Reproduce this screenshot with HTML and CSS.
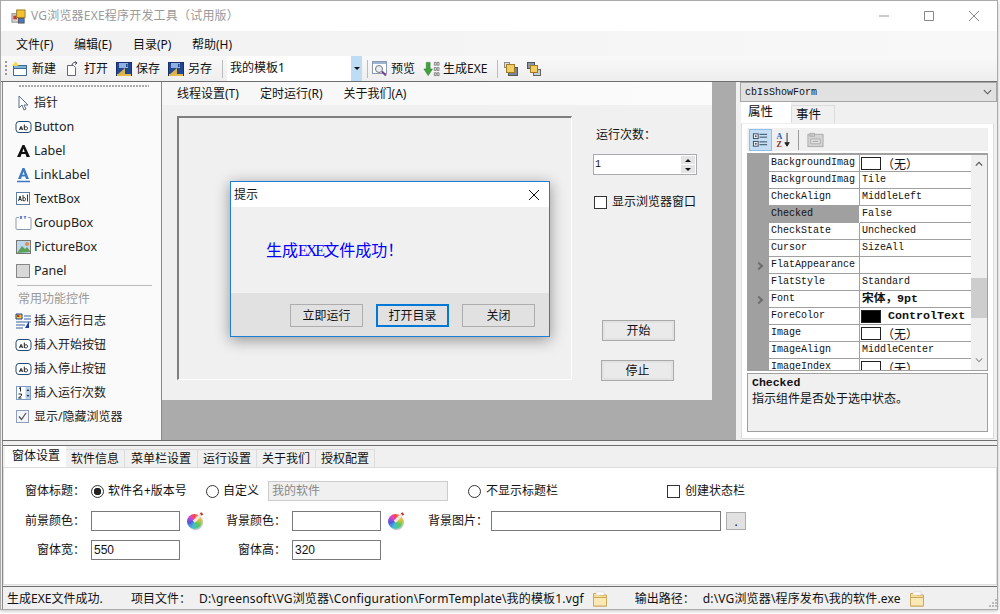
FILE: index.html
```html
<!DOCTYPE html>
<html lang="zh-CN">
<head>
<meta charset="UTF-8">
<title>VG浏览器EXE程序开发工具（试用版）</title>
<link rel="stylesheet" href="styles.css">
</head>
<body>
<svg class="defs" xmlns="http://www.w3.org/2000/svg">
	<symbol id="i-ab" viewBox="0 0 16 16"><rect x="0.5" y="2.5" width="15" height="11" rx="3" fill="#fff" stroke="#23476e"/><path d="M4 11l1.300-3.400h.6L7 11M4.500 9.800h2.200M8.800 5.500V11M8.800 8.500c1.800-1.400 3.200-.8 3.200.8s-1.400 2.200-3.200.8" fill="none" stroke="#222"/></symbol>
	<symbol id="i-folder" viewBox="0 0 17 16"><path d="M1.500 2.500h5l1 1.500h7v11h-13z" fill="#f6dc95" stroke="#c9a860"/><path d="M1.500 6.500h13v8.500h-13z" fill="#fbe9b5" stroke="#c9a860"/><path d="M4 1h8v3H4z" fill="#fff" stroke="#c9c9c9" stroke-width=".5"/></symbol>
	<symbol id="i-save" viewBox="0 0 16 16"><rect x="0.500" y="1.500" width="15" height="13" fill="#23478f" stroke="#1a2f6b"/><path d="M3 2h9v5H3z" fill="#8fb0e0"/><path d="M1 14L9 7v7z" fill="#d7b24e"/><path d="M1 13h14v2H1z" fill="#e0b94a"/><path d="M10 3h1.500v3H10z" fill="#23478f"/></symbol>
	<symbol id="i-stack" viewBox="0 0 16 16"><rect x="5.500" y="6.500" width="9" height="8" fill="#7b8596" stroke="#555"/><rect x="1.500" y="1.500" width="5" height="5" fill="#e0e0e0" stroke="#8c8c8c"/><rect x="3.500" y="3.500" width="8" height="8" fill="#f3cc62" stroke="#9c7c27"/></symbol>
	<symbol id="i-stack2" viewBox="0 0 16 16"><rect x="1.500" y="1.500" width="7" height="6" fill="#8d97a8" stroke="#555"/><rect x="7.500" y="8.500" width="7" height="6" fill="#c4ccd8" stroke="#666"/><rect x="4.500" y="4.500" width="7" height="7" fill="#f3cc62" stroke="#9c7c27"/></symbol>
</svg>
<div class="window">
	<div class="titlebar">
		<svg class="app-icon" viewBox="0 0 16 16"><rect x="1" y="5" width="7" height="9" fill="#d8d8d8" stroke="#888"/><rect x="2.500" y="7" width="4" height="4" fill="#c8382c"/><rect x="6" y="1" width="9" height="8" fill="#f1c232" stroke="#9c7c27"/><rect x="8" y="10" width="6" height="5" fill="#4a78c8" stroke="#555"/></svg>
		<span class="title-text">VG浏览器EXE程序开发工具（试用版）</span>
		<div class="win-btns">
			<svg viewBox="0 0 10 10"><path d="M0 5h10" stroke="#999" fill="none"/></svg>
			<svg viewBox="0 0 10 10"><path d="M.5.500h9v9h-9z" stroke="#888" fill="none"/></svg>
			<svg viewBox="0 0 10 10"><path d="M0 0l10 10M10 0L0 10" stroke="#888" fill="none"/></svg>
		</div>
	</div>
	<div class="menubar">
		<span>文件(F)</span><span>编辑(E)</span><span>目录(P)</span><span>帮助(H)</span>
	</div>
	<div class="toolbar">
		<span class="grip"></span>
		<span class="tool">
			<svg class="ico" viewBox="0 0 16 16"><path d="M1.500 4.500h13v10h-13z" fill="#fff" stroke="#3d6a8f"/><path d="M1.500 4.500h13v3h-13z" fill="#7fb2d8" stroke="#3d6a8f"/><path d="M3 0l1 2 2-1-1 2 2 1-2 1H2L0 4l2-1z" fill="#f5d94c"/></svg>
			新建
		</span>
		<span class="tool">
			<svg class="ico" viewBox="0 0 16 16"><path d="M3.500 4.500h6l2 2v8h-8z" fill="#fff" stroke="#667"/><path d="M8 4c1-3 3-3 5-2M11 .5l2 1.500-2 1.500" fill="none" stroke="#445"/></svg>
			打开
		</span>
		<span class="tool"><svg class="ico"><use href="#i-save"/></svg>保存</span>
		<span class="tool"><svg class="ico"><use href="#i-save"/></svg>另存</span>
		<span class="tsep sep-a"></span>
		<div class="combo">
			<span class="combo-text">我的模板1</span>
			<span class="combo-arrow"></span>
		</div>
		<span class="tsep sep-b"></span>
		<span class="tool tool-preview">
			<svg class="ico" viewBox="0 0 16 16"><rect x="0.500" y="0.500" width="14" height="12" fill="#fff" stroke="#8a9ab0"/><path d="M1 1h13v2H1z" fill="#9cb4d4"/><circle cx="7" cy="8" r="3.500" fill="#e6eef8" stroke="#777"/><path d="M10 10.500l4 4" stroke="#7a3f92" stroke-width="2"/></svg>
			预览
		</span>
		<span class="tool tool-build">
			<svg class="ico" viewBox="0 0 18 16"><path d="M3.500 1h4v7H10l-4.500 7L1 8h2.500z" fill="#3fa33c" stroke="#2a7a2a" stroke-width=".6"/><path d="M12 1h2v3h-2zM15 1h2v3h-2zM12 6.500h2v3h-2zM15 6.500h2v3h-2zM12 12h2v3h-2zM15 12h2v3h-2z" fill="none" stroke="#666" stroke-width=".8"/></svg>
			生成EXE
		</span>
		<span class="tsep sep-c"></span>
		<svg class="ico ico-first"><use href="#i-stack"/></svg>
		<svg class="ico ico-second"><use href="#i-stack2"/></svg>
	</div>

	<div class="main">
		<div class="toolbox">
			<div class="dots"></div>
			<div class="tb-item cn-item">
				<svg class="tb-ico" viewBox="0 0 17 16"><path d="M4 1v12l3-3 2 5 2-1-2-4h4z" fill="#fff" stroke="#5a6f8c"/></svg>
				指针
			</div>
			<div class="tb-item"><svg class="tb-ico"><use href="#i-ab"/></svg>Button</div>
			<div class="tb-item">
				<svg class="tb-ico" viewBox="0 0 17 16"><path d="M2 14L7.500 2h2L15 14h-3.500l-1-3H6.500l-1 3zM7.300 9h2.400L8.500 5.500z" fill="#111"/></svg>
				Label
			</div>
			<div class="tb-item">
				<svg class="tb-ico" viewBox="0 0 17 16"><path d="M3 12L7.500 1h2L14 12h-3l-.8-2.500H6.800L6 12zM7.400 7.800h2.200L8.500 4.500z" fill="#3b78c4"/><path d="M2 14.500h13" stroke="#3b78c4" stroke-width="1.500"/></svg>
				LinkLabel
			</div>
			<div class="tb-item">
				<svg class="tb-ico" viewBox="0 0 17 16"><rect x="1.500" y="1.500" width="13" height="12" fill="#fff" stroke="#5e7ea8"/><path d="M3.500 10l1.500-5 1.500 5M4 8.500h2M8 4v6M8 7c2-1 2.500 0 2.500 1.300S9.500 10.500 8 9.500M12.500 3.500v7" fill="none" stroke="#222" stroke-width=".9"/></svg>
				TextBox
			</div>
			<div class="tb-item">
				<svg class="tb-ico" viewBox="0 0 17 16"><path d="M4 2.500H2a1 1 0 0 0-1 1v10a1 1 0 0 0 1 1h13a1 1 0 0 0 1-1v-10a1 1 0 0 0-1-1h-2" fill="#fff" stroke="#8b9aac"/><path d="M5 1l2 3M7 1L5 4M9 1l1 1.500L11 1M10 2.500V4" fill="none" stroke="#2244bb" stroke-width=".8"/></svg>
				GroupBox
			</div>
			<div class="tb-item">
				<svg class="tb-ico" viewBox="0 0 17 16"><rect x="1.500" y="1.500" width="14" height="13" fill="#bcd8ee" stroke="#777"/><path d="M2 14l5-7 3 3 2-2 3 4v1z" fill="#5da05a"/><circle cx="12" cy="5" r="2" fill="#e98a4a"/></svg>
				PictureBox
			</div>
			<div class="tb-item">
				<svg class="tb-ico" viewBox="0 0 17 16"><rect x="1.500" y="1.500" width="13" height="13" fill="#d8d8d8" stroke="#222" stroke-dasharray="1 1"/></svg>
				Panel
			</div>
			<div class="tb-sep"></div>
			<div class="tb-head">常用功能控件</div>
			<div class="tb-item cn-item">
				<svg class="tb-ico" viewBox="0 0 17 16"><path d="M1 1h6v5H1z" fill="#f2d22e" stroke="#1b3fa0"/><path d="M2 2h2.500v2H2z" fill="#d22"/><path d="M9 3h7M9 6h7M1 9h15M1 12h9M1 15h7" stroke="#3a64a0"/><path d="M10 15l4-7v7" fill="#1b3fa0"/></svg>
				插入运行日志
			</div>
			<div class="tb-item cn-item"><svg class="tb-ico"><use href="#i-ab"/></svg>插入开始按钮</div>
			<div class="tb-item cn-item"><svg class="tb-ico"><use href="#i-ab"/></svg>插入停止按钮</div>
			<div class="tb-item cn-item">
				<svg class="tb-ico" viewBox="0 0 17 16"><rect x="1.500" y="1.500" width="14" height="13" fill="#fff" stroke="#7d9ac4"/><path d="M10.500 2h4.500v12h-4.500z" fill="#bcd0ea"/><path d="M4 3.500l1.500-1v4M3.500 9h3v1.500l-3 2.500h3" fill="none" stroke="#222"/><path d="M11.500 6l1.500-2 1.500 2zM11.500 10l1.500 2 1.500-2z" fill="#234"/></svg>
				插入运行次数
			</div>
			<div class="tb-item cn-item">
				<svg class="tb-ico" viewBox="0 0 17 16"><rect x="1.500" y="1.500" width="12" height="12" fill="#f3f5fb" stroke="#8d9dc0"/><path d="M4 7.500l2.500 3L11 4" fill="none" stroke="#555" stroke-width="1.300"/></svg>
				显示/隐藏浏览器
			</div>
		</div>

		<div class="center">
			<div class="mock">
				<div class="mock-menu">
					<span>线程设置(T)</span><span>定时运行(R)</span><span>关于我们(A)</span>
				</div>
				<div class="mock-body">
					<div class="group"></div>
					<div class="side">
						<div class="side-label">运行次数：</div>
						<div class="spin">
							<span class="spin-val">1</span>
							<span class="spin-btns"><i class="up"></i><i class="down"></i></span>
						</div>
						<label class="side-check"><span class="check"></span>显示浏览器窗口</label>
						<div class="mock-btn btn-start">开始</div>
						<div class="mock-btn btn-stop">停止</div>
					</div>
				</div>
			</div>
		</div>

		<div class="props">
			<div class="prop-combo">
				<span>cbIsShowForm</span>
				<svg viewBox="0 0 10 6"><path d="M1 1l4 4 4-4" fill="none" stroke="#555" stroke-width="1.200"/></svg>
			</div>
			<div class="prop-tabs">
				<span class="prop-tab active">属性</span>
				<span class="prop-tab">事件</span>
			</div>
			<div class="prop-panel">
				<div class="prop-tools">
					<span class="pt-btn pt-on">
						<svg viewBox="0 0 18 16"><rect x="1.500" y="1.500" width="5" height="5" fill="#fff" stroke="#345"/><rect x="1.500" y="9.500" width="5" height="5" fill="#fff" stroke="#345"/><path d="M3 4h2M4 3v2M3 12h2M4 11v2M8 2h8M8 5h8M8 10h8M8 13h8" stroke="#345"/></svg>
					</span>
					<span class="pt-btn">
						<svg viewBox="0 0 18 18"><text x="1" y="8" class="az-a">A</text><text x="1" y="17" class="az-z">Z</text><path d="M13 1v14M10.500 12l2.500 4 2.500-4z" stroke="#222" fill="#222"/></svg>
					</span>
					<span class="pt-sep"></span>
					<span class="pt-btn">
						<svg viewBox="0 0 18 16"><rect x="1" y="2" width="16" height="13" fill="#d4d4d4" stroke="#aaa"/><path d="M3 1h5v3H3z" fill="#ccc" stroke="#aaa"/><path d="M4 7h10v5H4z" fill="#e6e6e6" stroke="#aaa"/><path d="M6 9.500h6" stroke="#999"/></svg>
					</span>
				</div>
				<div class="prop-grid">
					<div class="rows">
						<div class="row"><span class="gut"></span><span class="name">BackgroundImag</span><span class="val"><b class="swatch"></b><em class="cn">（无）</em></span></div>
						<div class="row"><span class="gut"></span><span class="name">BackgroundImag</span><span class="val">Tile</span></div>
						<div class="row"><span class="gut"></span><span class="name">CheckAlign</span><span class="val">MiddleLeft</span></div>
						<div class="row"><span class="gut"></span><span class="name sel">Checked</span><span class="val">False</span></div>
						<div class="row"><span class="gut"></span><span class="name">CheckState</span><span class="val">Unchecked</span></div>
						<div class="row"><span class="gut"></span><span class="name">Cursor</span><span class="val">SizeAll</span></div>
						<div class="row"><span class="gut"><i class="chev"></i></span><span class="name">FlatAppearance</span><span class="val"></span></div>
						<div class="row"><span class="gut"></span><span class="name">FlatStyle</span><span class="val">Standard</span></div>
						<div class="row"><span class="gut"><i class="chev"></i></span><span class="name">Font</span><span class="val strong">宋体，9pt</span></div>
						<div class="row"><span class="gut"></span><span class="name">ForeColor</span><span class="val strong"><b class="swatch dark"></b>ControlText</span></div>
						<div class="row"><span class="gut"></span><span class="name">Image</span><span class="val"><b class="swatch"></b><em class="cn">（无）</em></span></div>
						<div class="row"><span class="gut"></span><span class="name">ImageAlign</span><span class="val">MiddleCenter</span></div>
						<div class="row"><span class="gut"></span><span class="name">ImageIndex</span><span class="val"><b class="swatch"></b><em class="cn">（无）</em></span></div>
					</div>
					<div class="vscroll">
						<svg class="chev-up" viewBox="0 0 10 6"><path d="M1 5l4-4 4 4" fill="none" stroke="#555" stroke-width="1.500"/></svg>
						<span class="thumb"></span>
						<svg class="chev-down" viewBox="0 0 10 6"><path d="M1 1l4 4 4-4" fill="none" stroke="#999" stroke-width="1.500"/></svg>
					</div>
				</div>
				<div class="prop-desc">
					<div class="desc-name">Checked</div>
					<div class="desc-text">指示组件是否处于选中状态。</div>
				</div>
			</div>
		</div>
	</div>

	<div class="lower">
		<div class="tabs">
			<span class="tab active">窗体设置</span>
			<span class="tab">软件信息</span>
			<span class="tab tab-wide">菜单栏设置</span>
			<span class="tab">运行设置</span>
			<span class="tab">关于我们</span>
			<span class="tab">授权配置</span>
		</div>
		<div class="tab-body">
			<div class="frow">
				<span class="lab l1">窗体标题：</span>
				<span class="opt o1"><span class="radio on"></span>软件名+版本号</span>
				<span class="opt o2"><span class="radio"></span>自定义</span>
				<span class="field disabled w180">我的软件</span>
				<span class="opt o3"><span class="radio"></span>不显示标题栏</span>
				<span class="opt o4"><span class="check"></span>创建状态栏</span>
			</div>
			<div class="frow r2">
				<span class="lab l1">前景颜色：</span>
				<span class="field w89"></span>
				<span class="wheel"></span>
				<span class="lab l2">背景颜色：</span>
				<span class="field w89"></span>
				<span class="wheel"></span>
				<span class="lab l3">背景图片：</span>
				<span class="field w230"></span>
				<span class="dot-btn">.</span>
			</div>
			<div class="frow r3">
				<span class="lab l1">窗体宽：</span>
				<span class="field w89">550</span>
				<span class="lab l4">窗体高：</span>
				<span class="field w89">320</span>
			</div>
		</div>
	</div>

	<div class="status">
		<span class="st-msg">生成EXE文件成功.</span>
		<span class="st-lab">项目文件：</span>
		<span class="st-path">D:\greensoft\VG浏览器\Configuration\FormTemplate\我的模板1.vgf</span>
		<svg class="st-folder"><use href="#i-folder"/></svg>
		<span class="st-lab st-lab2">输出路径：</span>
		<span class="st-path">d:\VG浏览器\程序发布\我的软件.exe</span>
		<svg class="st-folder"><use href="#i-folder"/></svg>
		<svg class="st-grip" viewBox="0 0 9 9"><path d="M7 1h2v2H7zM4 4h2v2H4zM7 4h2v2H7zM1 7h2v2H1zM4 7h2v2H4zM7 7h2v2H7z" fill="#bbb"/></svg>
	</div>

	<div class="dialog">
		<div class="dlg-title">
			<span>提示</span>
			<svg viewBox="0 0 10 10"><path d="M0 0l10 10M10 0L0 10" stroke="#111" fill="none"/></svg>
		</div>
		<div class="dlg-body">生成<span class="dlg-lat">EXE</span>文件成功！</div>
		<div class="dlg-foot">
			<span class="dlg-btn">立即运行</span>
			<span class="dlg-btn primary">打开目录</span>
			<span class="dlg-btn">关闭</span>
		</div>
	</div>
</div>
</body>
</html>
```

FILE: styles.css
```css
* {
	box-sizing: border-box;
}
html, body {
	margin: 0;
	padding: 0;
	background: #fff;
	overflow: hidden;
}
body {
	width: 1000px;
	height: 614px;
	font: 12px/16px "Noto Sans", "Noto Sans CJK SC", sans-serif;
	color: #111;
}
.defs {
	display: block;
	width: 0;
	height: 0;
	overflow: hidden;
}
.window {
	position: relative;
	width: 998px;
	height: 610px;
	border: 1px solid #aaa;
	background: #f0f0f0;
	box-shadow: 0 1px 4px rgba(0, 0, 0, 0.25);
}

/* title */
.titlebar {
	display: flex;
	align-items: center;
	height: 30px;
	background: #fff;
	padding-left: 10px;
}
.app-icon {
	width: 15px;
	height: 15px;
}
.title-text {
	margin-left: 5px;
	letter-spacing: 0.2px;
	color: #999;
}
.win-btns {
	margin-left: auto;
	display: flex;
	gap: 35px;
	padding-right: 18px;
}
.win-btns svg {
	width: 10px;
	height: 10px;
}

.menubar {
	display: flex;
	align-items: center;
	height: 25px;
	padding: 2px 0 0 15px;
	background: linear-gradient(to right, #f1f1f1, #f8f8f8);
}
.menubar span {
	width: 59px;
}
.menubar span:first-child {
	width: 58px;
}

.toolbar {
	display: flex;
	align-items: center;
	height: 26px;
	padding-left: 4px;
	border-bottom: 1px solid #6e6e6e;
	background: linear-gradient(#f9f9f9, #eeeeee);
}
.grip {
	width: 2px;
	height: 16px;
	margin-right: 5px;
	background: repeating-linear-gradient(#999 0 2px, transparent 2px 4px);
}
.tool {
	display: flex;
	align-items: center;
	gap: 4px;
	margin-right: 8px;
}
.ico {
	width: 16px;
	height: 16px;
	flex: none;
}
.tsep {
	width: 1px;
	height: 18px;
	background: #bbb;
}
.sep-a {
	margin: 0 4px 0 2px;
}
.combo {
	display: flex;
	width: 135px;
	height: 25px;
	background: #fff;
}
.combo-text {
	flex: 1;
	padding: 4px 0 0 3px;
}
.combo-arrow {
	width: 11px;
	background: #bfdcf5;
	position: relative;
}
.combo-arrow::after {
	content: "";
	position: absolute;
	left: 3px;
	top: 11px;
	border: 3px solid transparent;
	border-top: 3px solid #111;
}
.sep-b {
	margin: 0 4px 0 5px;
}
.tool-preview {
	gap: 3px;
	margin-right: 8px;
}
.tool-build {
	gap: 3px;
	margin-right: 10px;
}
.tool-build .ico {
	width: 17px;
}
.sep-c {
	margin-right: 5px;
}
.ico-first {
	margin-right: 7px;
}

/* main row */
.main {
	display: flex;
	height: 359px;
	margin-left: 1px;
	border-bottom: 1px solid #6e6e6e;
}
.toolbox {
	width: 160px;
	padding-left: 12px;
	background: #fafafa;
	border-left: 1px solid #8a8a8a;
	border-right: 1px solid #8a8a8a;
}
.dots {
	width: 130px;
	height: 2px;
	margin: 3px 0 4px 4px;
	background: repeating-linear-gradient(to right, #aaa 0 2px, transparent 2px 3px);
}
.tb-item {
	display: flex;
	align-items: center;
	gap: 2px;
	height: 24px;
	font-size: 12.5px;
	color: #222;
}
.tb-item.cn-item {
	font-size: 12px;
}
.tb-ico {
	width: 17px;
	height: 16px;
	flex: none;
}
.tb-sep {
	width: 135px;
	height: 1px;
	margin: 2px 0 3px 2px;
	background: #bbb;
}
.tb-head {
	height: 20px;
	padding: 2px 0 0 3px;
	color: #999;
}

.center {
	width: 574px;
	background: #ababab;
}
.mock {
	width: 550px;
	height: 318px;
	background: #f0f0f0;
}
.mock-menu {
	display: flex;
	align-items: center;
	gap: 21px;
	height: 23px;
	padding-left: 15px;
	background: linear-gradient(to right, #f6f6f6, #fbfbfb);
}
.mock-body {
	display: flex;
	padding: 11px 0 0 15px;
}
.group {
	width: 395px;
	height: 264px;
	border: 2px solid #7f7f7f;
	border-right: 1px solid #fff;
	border-bottom: 1px solid #fff;
}
.side {
	margin-left: 21px;
	width: 104px;
}
.side-label {
	margin: 11px 0 0 3px;
}
.spin {
	display: flex;
	align-items: center;
	height: 21px;
	margin-top: 11px;
	background: #fff;
	border: 1px solid #a9a9b0;
}
.spin-val {
	flex: 1;
	padding-left: 1px;
	font: 10px "Liberation Mono", monospace;
}
.spin-btns {
	display: flex;
	flex-direction: column;
	gap: 1px;
	width: 14px;
	height: 17px;
	margin-right: 1px;
}
.spin-btns i {
	display: flex;
	flex: 1;
	justify-content: center;
	align-items: center;
	background: #e4e4e4;
}
.spin-btns i::after {
	content: "";
	border: 3px solid transparent;
}
.spin-btns .up::after {
	border-bottom-color: #111;
	border-top-width: 0;
}
.spin-btns .down::after {
	border-top-color: #111;
	border-bottom-width: 0;
}
.side-check {
	display: flex;
	align-items: center;
	gap: 5px;
	margin: 19px 0 0 1px;
	height: 16px;
}
.check {
	width: 13px;
	height: 13px;
	flex: none;
	background: #fff;
	border: 1px solid #333;
}
.mock-btn {
	width: 73px;
	height: 21px;
	line-height: 19px;
	text-align: center;
	background: #eaeaea;
	border: 1px solid #aaa;
	box-shadow: inset 0 0 0 2px #e2e2e2;
}
.btn-start {
	margin: 110px 0 0 9px;
}
.btn-stop {
	margin: 19px 0 0 8px;
}

/* property grid */
.props {
	width: 261px;
	padding: 0 0 0 4px;
}
.prop-combo {
	display: flex;
	align-items: center;
	justify-content: space-between;
	height: 20px;
	padding: 0 4px;
	background: #e1e1e1;
	border: 1px solid #a6a6a6;
	font: 10px "Liberation Mono", monospace;
}
.prop-combo svg {
	width: 9px;
	height: 6px;
}
.prop-tabs {
	display: flex;
	align-items: flex-end;
	height: 21px;
	padding-left: 1px;
}
.prop-tab {
	width: 44px;
	height: 18px;
	padding-left: 4px;
	line-height: 18px;
	font-size: 12.5px;
	border: 1px solid #dcdcdc;
	border-bottom: 0;
}
.prop-tab.active {
	width: 50px;
	height: 21px;
	line-height: 20px;
	padding-left: 7px;
	background: #fff;
	border: 0;
}
.prop-panel {
	height: 316px;
	margin: 0 3px 0 1px;
	padding: 4px 5px 0 5px;
	background: #fff;
	border: 1px solid #dcdcdc;
	border-top-color: #eee;
}
.prop-tools {
	display: flex;
	align-items: center;
	height: 23px;
	padding-left: 2px;
	background: #f0f0f0;
}
.pt-btn {
	display: flex;
	align-items: center;
	justify-content: center;
	width: 23px;
	height: 22px;
}
.pt-btn svg {
	width: 17px;
	height: 16px;
}
.pt-on {
	background: #c3def5;
	border: 1px solid #8cc0ea;
}
.az-a, .az-z {
	font: bold 9px "Liberation Serif", serif;
}
.az-a {
	fill: #2b55b0;
}
.az-z {
	fill: #8f2b2b;
}
.pt-sep {
	width: 1px;
	height: 20px;
	margin: 0 5px 0 3px;
	background: #999;
}
.prop-grid {
	display: flex;
	height: 218px;
	margin-top: 2px;
	background: #f0f0f0;
	border: 1px solid #a0a0a0;
	border-top-width: 2px;
	overflow: hidden;
}
.rows {
	width: 223px;
	flex: none;
}
.row {
	display: flex;
	height: 17px;
	background: #fff;
	font: 10px/16px "Liberation Mono", "Noto Sans CJK SC", monospace;
	border-bottom: 1px solid #a0a0a0;
}
.gut {
	display: flex;
	align-items: center;
	justify-content: center;
	width: 21px;
	height: 17px;
	margin-bottom: -1px;
	background: #a0a0a0;
}
.chev {
	width: 6px;
	height: 6px;
	border-top: 2px solid #6e6e6e;
	border-right: 2px solid #6e6e6e;
	transform: rotate(45deg);
}
.name {
	width: 91px;
	padding-left: 2px;
	overflow: hidden;
	white-space: nowrap;
	border-right: 1px solid #a0a0a0;
}
.name.sel {
	background: #a0a0a0;
	height: 17px;
	border-right-color: #fff;
}
.val {
	display: flex;
	align-items: center;
	flex: 1;
	padding-left: 2px;
	overflow: hidden;
	white-space: nowrap;
}
.val.strong {
	font-weight: bold;
	font-size: 11.7px;
}
.swatch {
	width: 20px;
	height: 13px;
	margin: 0 7px 0 -1px;
	flex: none;
	background: #fff;
	border: 1px solid #222;
}
.swatch.dark {
	background: #000;
}
.cn {
	font: 12px "Noto Sans CJK SC", sans-serif;
	margin-left: -6px;
}
.vscroll {
	display: flex;
	flex: 1;
	flex-direction: column;
	align-items: center;
}
.chev-up, .chev-down {
	width: 8px;
	height: 6px;
	flex: none;
}
.chev-up {
	margin-top: 6px;
}
.thumb {
	width: 16px;
	height: 40px;
	margin-top: 111px;
	background: #cdcdcd;
}
.chev-down {
	margin-top: 39px;
}
.prop-desc {
	height: 59px;
	margin-top: 2px;
	padding: 1px 4px;
	background: #f0f0f0;
	border: 1px solid #a0a0a0;
}
.desc-name {
	font: bold 11.5px/16px "Liberation Mono", monospace;
}

/* lower settings panel */
.lower {
	height: 145px;
	margin-left: 1px;
	padding-top: 4px;
	border-left: 1px solid #8a8a8a;
}
.tabs {
	display: flex;
	align-items: flex-end;
	height: 22px;
	padding-left: 2px;
	border-top: 1px solid #6e6e6e;
}
.tab {
	height: 18px;
	padding: 0 5px;
	line-height: 18px;
	font-size: 12px;
	background: #f0f0f0;
	border: 1px solid #dcdcdc;
	border-left: 0;
	border-bottom: 0;
}
.tab.tab-wide {
	padding: 0 6px;
}
.tab.active {
	width: 61px;
	height: 21px;
	line-height: 19px;
	padding: 0 0 0 7px;
	background: #fff;
	border: 0;
}
.tab-body {
	height: 118px;
	padding-top: 13px;
	background: #fff;
	border: 1px solid #dcdcdc;
}
.frow {
	display: flex;
	align-items: center;
	height: 20px;
}
.r2 {
	margin-top: 10px;
}
.r3 {
	margin-top: 9px;
}
.lab {
	text-align: right;
	white-space: nowrap;
}
.l1 {
	width: 81px;
	margin-right: 6px;
}
.l2 {
	width: 84px;
	margin-right: 6px;
}
.l3 {
	width: 85px;
	margin-right: 3px;
}
.l4 {
	width: 106px;
	margin-right: 6px;
}
.opt {
	display: flex;
	align-items: center;
	gap: 4px;
	white-space: nowrap;
}
.o1 {
	width: 115px;
}
.o2 {
	width: 62px;
}
.o3 {
	margin-left: 20px;
	width: 199px;
	gap: 5px;
}
.o4 {
	gap: 5px;
}
.radio {
	width: 13px;
	height: 13px;
	flex: none;
	border-radius: 50%;
	border: 1px solid #333;
	background: #fff;
}
.radio.on {
	background: radial-gradient(circle, #222 0 3.5px, #fff 4px);
}
.field {
	display: block;
	height: 20px;
	padding-left: 2px;
	line-height: 18px;
	font-family: "Liberation Sans", "Noto Sans CJK SC", sans-serif;
	background: #fff;
	border: 1px solid #7a7a7a;
}
.field.disabled {
	padding-left: 3px;
	color: #888;
	background: #f0f0f0;
	border-color: #ccc;
}
.w89 {
	width: 89px;
}
.w180 {
	width: 180px;
}
.w230 {
	width: 230px;
}
.wheel {
	position: relative;
	width: 15px;
	height: 15px;
	margin-left: 7px;
	flex: none;
	border-radius: 50%;
	background: conic-gradient(#f44 0, #fb3 60deg, #5c5 130deg, #4bd 200deg, #55d 260deg, #d4c 320deg, #f44 360deg);
	box-shadow: 1px 1px 1px #bbb;
}
.wheel::after {
	content: "";
	position: absolute;
	left: 5px;
	top: 2px;
	width: 10px;
	height: 3px;
	background: #e8e8e8;
	border-right: 2px solid #c33;
	transform: rotate(-45deg);
}
.dot-btn {
	width: 20px;
	height: 18px;
	margin-left: 5px;
	line-height: 18px;
	text-align: center;
	background: #e1e1e1;
	border: 1px solid #adadad;
}

/* status */
.status {
	display: flex;
	align-items: center;
	height: 23px;
	padding: 1px 0 0 4px;
	background: #f0f0f0;
	border-top: 1px solid #6e6e6e;
	border-left: 1px solid #8a8a8a;
	margin-left: 1px;
}
.st-msg {
	width: 124px;
}
.st-lab {
	width: 68px;
}
.st-lab2 {
	margin-left: 26px;
}
.st-path {
	white-space: nowrap;
	letter-spacing: 0.16px;
}
.st-folder {
	width: 17px;
	height: 16px;
	margin-left: 8px;
}
.st-grip {
	width: 9px;
	height: 9px;
	margin: 8px 0 0 auto;
}

/* dialog over the designer */
.dialog {
	position: absolute;
	left: 229px;
	top: 180px;
	display: flex;
	flex-direction: column;
	width: 320px;
	height: 156px;
	border: 1px solid #1b7fd8;
	background: #f0f0f0;
	box-shadow: 0 3px 14px rgba(0, 0, 0, 0.4);
}
.dlg-title {
	display: flex;
	align-items: center;
	justify-content: space-between;
	height: 25px;
	padding: 0 10px 0 3px;
	background: #fff;
}
.dlg-title svg {
	width: 10px;
	height: 10px;
}
.dlg-body {
	height: 86px;
	padding: 34px 0 0 35px;
	font: 16px/20px "Liberation Serif", "Noto Sans CJK SC", serif;
	color: #0000ff;
}
.dlg-lat {
	letter-spacing: -2px;
}
.dlg-foot {
	display: flex;
	flex: 1;
	gap: 13px;
	padding: 11px 0 0 59px;
	background: #e1e1e1;
}
.dlg-btn {
	width: 73px;
	height: 23px;
	line-height: 21px;
	text-align: center;
	border: 1px solid #adadad;
}
.dlg-btn.primary {
	line-height: 19px;
	border: 2px solid #0078d7;
}
```
